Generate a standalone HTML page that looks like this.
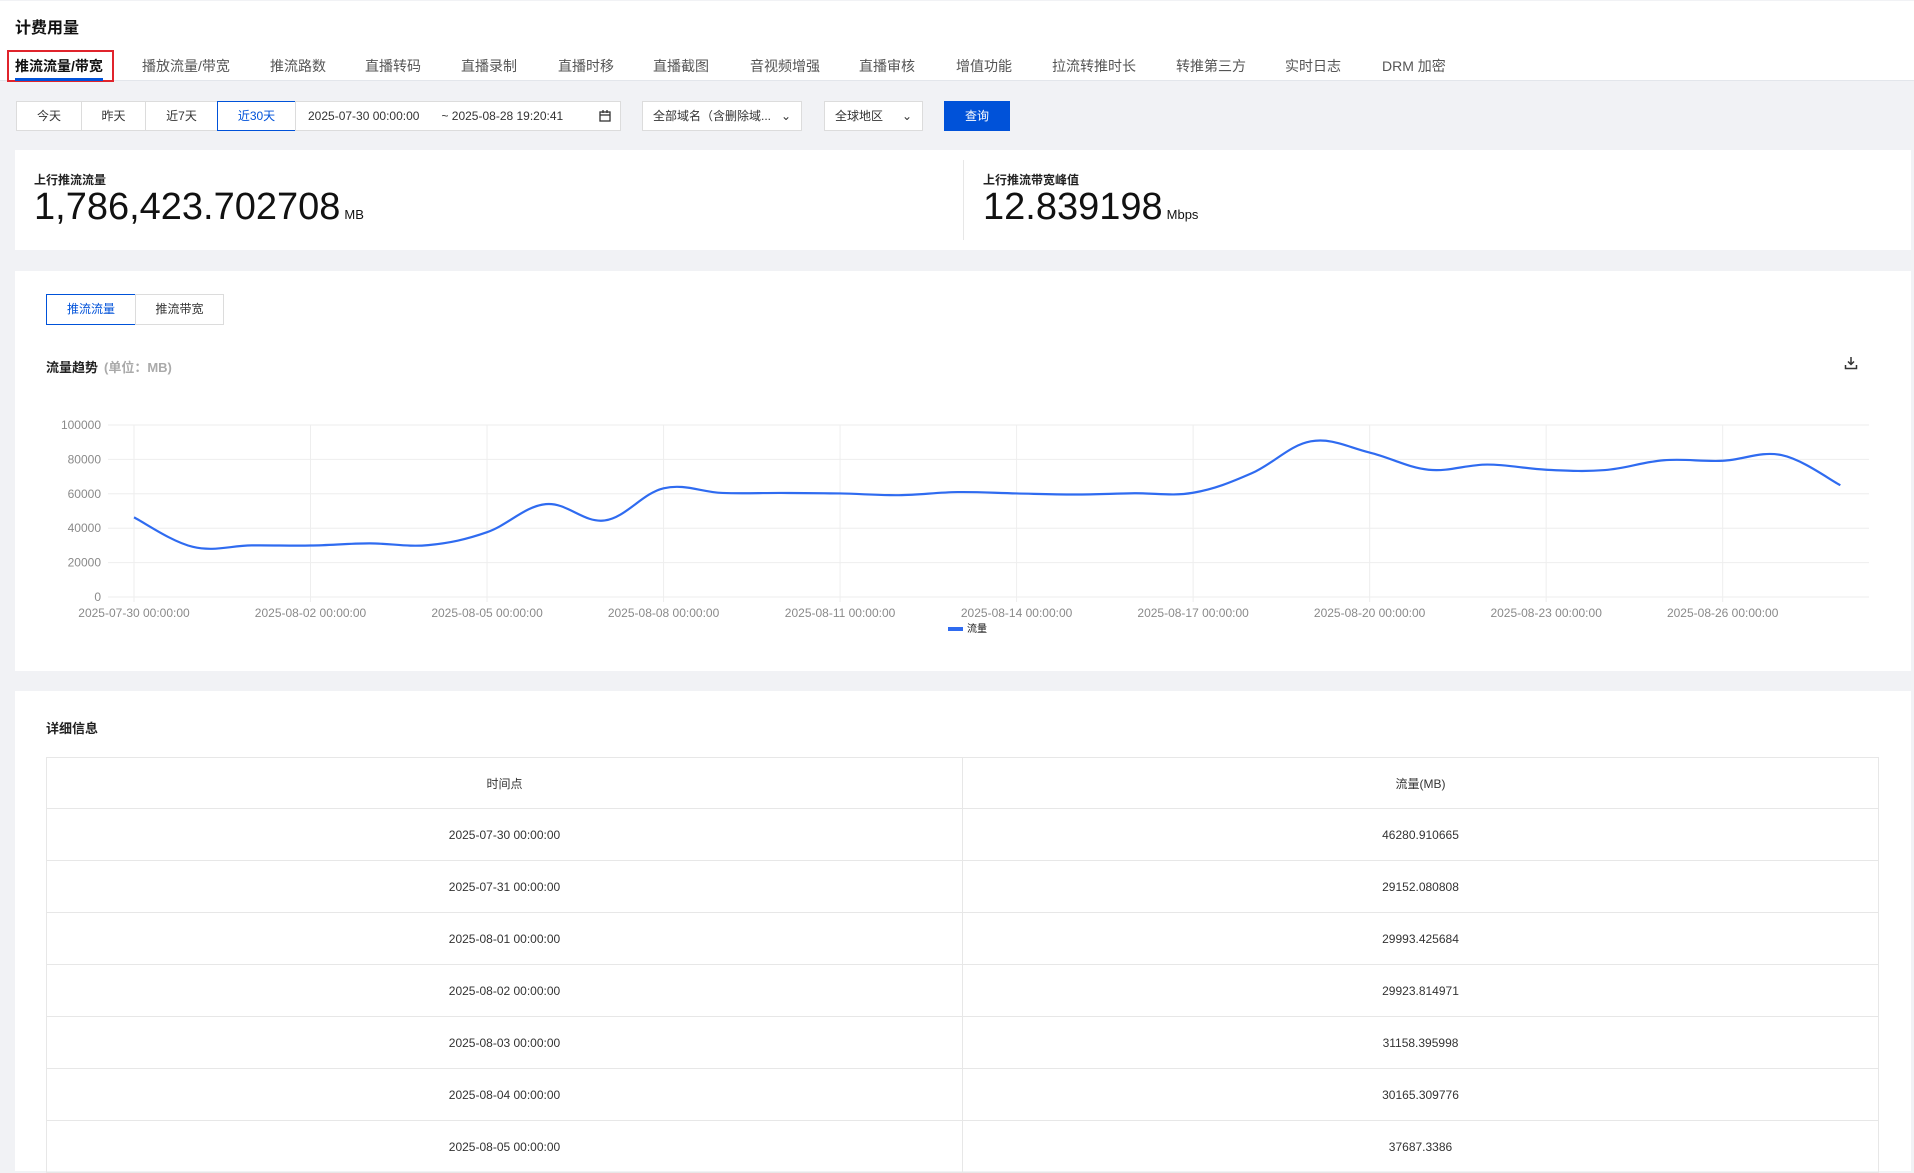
<!DOCTYPE html>
<html><head><meta charset="utf-8"><style>
*{box-sizing:border-box;margin:0;padding:0}
body{width:1914px;height:1161px;overflow:hidden;background:#f1f2f5;font-family:"Liberation Sans","Noto Sans CJK SC",sans-serif;color:#222;position:relative}
.abs{position:absolute}
.hdr{left:0;top:1px;width:1914px;height:80px;background:#fff;border-bottom:1px solid #e3e6eb}
.tab{position:absolute;top:56px;font-size:14px;color:#555;white-space:nowrap}
.fbtn{position:absolute;top:101px;height:30px;border:1px solid #dcdcdc;background:#fff;font-size:12px;line-height:28px;text-align:center;color:#333}
.card{position:absolute;background:#fff}
.gl{stroke:#eeeeee;stroke-width:1}
.yl{font-size:12px;fill:#8a8a8a;text-anchor:end}
.xl{font-size:12px;fill:#8a8a8a;text-anchor:middle}
table{border-collapse:collapse;position:absolute;left:46px;top:757px;width:1833px;font-size:12px;color:#333}
td{border:1px solid #e7e7e7;height:52px;text-align:center;width:50%}
tr:first-child td{height:51px}
</style></head><body>
<div class="abs hdr"></div>
<div class="abs" style="left:15px;top:14px;font-size:16px;font-weight:bold;color:#111">计费用量</div>
<div class="abs" style="left:7px;top:50px;width:107px;height:32px;border:2px solid #e0242c"></div>
<div class="tab" style="left:15px;color:#111;font-weight:bold">推流流量/带宽</div>
<div class="abs" style="left:15px;top:78px;width:88px;height:3px;background:#0052d9"></div>
<div class="tab" style="left:142px">播放流量/带宽</div>
<div class="tab" style="left:270px">推流路数</div>
<div class="tab" style="left:365px">直播转码</div>
<div class="tab" style="left:461px">直播录制</div>
<div class="tab" style="left:558px">直播时移</div>
<div class="tab" style="left:653px">直播截图</div>
<div class="tab" style="left:750px">音视频增强</div>
<div class="tab" style="left:859px">直播审核</div>
<div class="tab" style="left:956px">增值功能</div>
<div class="tab" style="left:1052px">拉流转推时长</div>
<div class="tab" style="left:1176px">转推第三方</div>
<div class="tab" style="left:1285px">实时日志</div>
<div class="tab" style="left:1382px">DRM 加密</div>

<div class="fbtn" style="left:16px;width:66px">今天</div>
<div class="fbtn" style="left:81px;width:65px">昨天</div>
<div class="fbtn" style="left:145px;width:73px">近7天</div>
<div class="fbtn" style="left:217px;width:79px;border-color:#0052d9;color:#0052d9">近30天</div>
<div class="fbtn" style="left:295px;width:326px;text-align:left;padding-left:12px">2025-07-30 00:00:00<span style="margin-left:22px">~ 2025-08-28 19:20:41</span>
<svg style="position:absolute;right:8px;top:7px" width="14" height="14" viewBox="0 0 14 14"><rect x="2" y="3" width="10" height="9" fill="none" stroke="#333" stroke-width="1.3"/><line x1="2" y1="6" x2="12" y2="6" stroke="#333" stroke-width="1.3"/><line x1="5" y1="1" x2="5" y2="4" stroke="#333" stroke-width="1.3"/><line x1="9" y1="1" x2="9" y2="4" stroke="#333" stroke-width="1.3"/></svg></div>
<div class="fbtn" style="left:642px;width:160px;text-align:left;padding-left:10px">全部域名（含删除域...<span style="position:absolute;right:10px">⌄</span></div>
<div class="fbtn" style="left:824px;width:99px;text-align:left;padding-left:10px">全球地区<span style="position:absolute;right:10px">⌄</span></div>
<div class="fbtn" style="left:944px;width:66px;background:#0052d9;border-color:#0052d9;color:#fff">查询</div>

<div class="card" style="left:15px;top:150px;width:1896px;height:100px"></div>
<div class="abs" style="left:963px;top:160px;width:1px;height:80px;background:#e7e7e7"></div>
<div class="abs" style="left:34px;top:171px;font-size:12px;font-weight:bold;color:#222">上行推流流量</div>
<div class="abs" style="left:34px;top:186px;font-size:38px;color:#111;white-space:nowrap">1,786,423.702708<span style="font-size:13px;margin-left:4px">MB</span></div>
<div class="abs" style="left:983px;top:171px;font-size:12px;font-weight:bold;color:#222">上行推流带宽峰值</div>
<div class="abs" style="left:983px;top:186px;font-size:38px;color:#111;white-space:nowrap">12.839198<span style="font-size:13px;margin-left:4px">Mbps</span></div>

<div class="card" style="left:15px;top:271px;width:1896px;height:400px"></div>
<div class="fbtn" style="left:46px;top:294px;width:90px;height:31px;line-height:29px;border-color:#0052d9;color:#0052d9">推流流量</div>
<div class="fbtn" style="left:135px;top:294px;width:89px;height:31px;line-height:29px">推流带宽</div>
<div class="abs" style="left:46px;top:357px;font-size:13px;font-weight:bold;color:#222">流量趋势<span style="font-weight:bold;color:#aaa;margin-left:6px">(单位：MB)</span></div>
<svg class="abs" style="left:1843px;top:355px" width="16" height="16" viewBox="0 0 16 16"><path d="M8 2v7M5 6.5l3 3 3-3M2.5 10v3.5h11V10" fill="none" stroke="#333" stroke-width="1.5"/></svg>

<svg class="abs" style="left:0;top:0" width="1914" height="700" id="ch">
<g id="grid"></g>
<path id="ln" fill="none" stroke="#2f6bf0" stroke-width="2.2"/>
<rect x="948" y="627" width="15" height="4" fill="#2f6bf0"/>
<text x="967" y="632" font-size="10" fill="#111">流量</text>
</svg>

<div class="card" style="left:15px;top:691px;width:1896px;height:480px"></div>
<div class="abs" style="left:46px;top:718px;font-size:13px;font-weight:bold;color:#222">详细信息</div>
<table>
<tr><td>时间点</td><td>流量(MB)</td></tr>
<tr><td>2025-07-30 00:00:00</td><td>46280.910665</td></tr>
<tr><td>2025-07-31 00:00:00</td><td>29152.080808</td></tr>
<tr><td>2025-08-01 00:00:00</td><td>29993.425684</td></tr>
<tr><td>2025-08-02 00:00:00</td><td>29923.814971</td></tr>
<tr><td>2025-08-03 00:00:00</td><td>31158.395998</td></tr>
<tr><td>2025-08-04 00:00:00</td><td>30165.309776</td></tr>
<tr><td>2025-08-05 00:00:00</td><td>37687.3386</td></tr>
</table>
<script>
var NS="http://www.w3.org/2000/svg",g=document.getElementById('grid');
function el(t,a,txt){var e=document.createElementNS(NS,t);for(var k in a)e.setAttribute(k,a[k]);if(txt)e.textContent=txt;g.appendChild(e);}
var x0=134,dx=58.84,y0=597,h=172;
for(var i=0;i<=5;i++){var y=y0-i*h/5;el('line',{x1:108,x2:1869,y1:y,y2:y,class:'gl'});el('text',{x:101,y:y+4,class:'yl'},String(i*20000));}
var labs=["07-30","08-02","08-05","08-08","08-11","08-14","08-17","08-20","08-23","08-26"];
for(var i=0;i<10;i++){var x=x0+i*3*dx;el('line',{x1:x,x2:x,y1:425,y2:602,class:'gl'});el('text',{x:x,y:617,class:'xl'},"2025-"+labs[i]+" 00:00:00");}
var v=[46280,29152,29993,29923,31158,30165,37687,54000,44500,63200,60500,60500,60200,59200,61000,60200,59600,60300,60600,72000,90500,84000,74000,77000,74000,73800,79500,79200,82500,65000];
var p=v.map(function(a,i){return [x0+i*dx,y0-a/100000*h]});
var d="M"+p[0][0]+","+p[0][1];
for(var i=0;i<p.length-1;i++){var a=p[i-1]||p[i],b=p[i],c=p[i+1],e=p[i+2]||c,t=0.18;
d+=" C"+(b[0]+(c[0]-a[0])*t)+","+(b[1]+(c[1]-a[1])*t)+" "+(c[0]-(e[0]-b[0])*t)+","+(c[1]-(e[1]-b[1])*t)+" "+c[0]+","+c[1];}
document.getElementById('ln').setAttribute('d',d);
</script>
</body></html>
